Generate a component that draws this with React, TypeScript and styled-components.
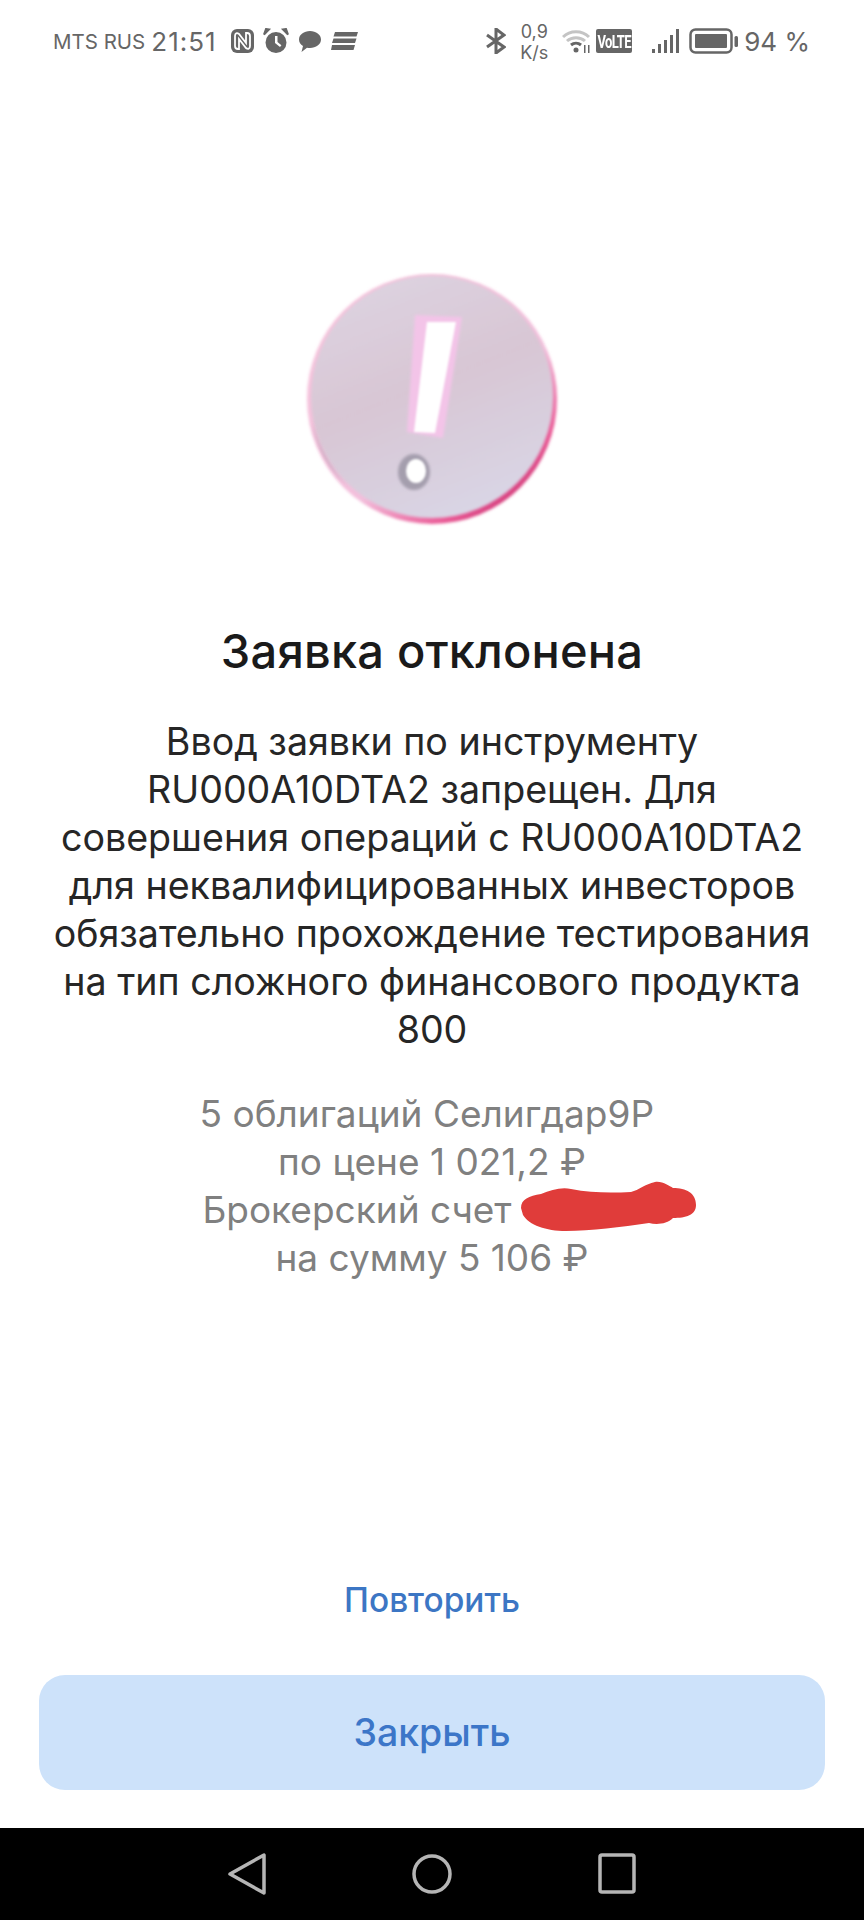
import React from "react";
import styled, { createGlobalStyle } from "styled-components";

const GlobalStyle = createGlobalStyle`
  html, body {
    margin: 0;
    padding: 0;
    background: #fff;
  }
  * {
    box-sizing: border-box;
  }
`;

const Page = styled.div`
  width: 864px;
  height: 1920px;
  display: flex;
  flex-direction: column;
  background: #fff;
  font-family: Inter, "Noto Sans", sans-serif;
  overflow: hidden;
`;

/* status bar */

const StatusBar = styled.div`
  height: 82px;
  padding: 0 54px 0 53px;
  display: flex;
  align-items: center;
  justify-content: space-between;
  color: #666;
`;

const StatusGroup = styled.div`
  display: flex;
  align-items: center;
`;

const Carrier = styled.span`
  font-size: 20.5px;
  margin-right: 6px;
`;

const Clock = styled.span`
  font-size: 26px;
  letter-spacing: 1px;
  margin-right: 14px;
`;

const StatusIcon = styled.svg<{ $gap?: number }>`
  display: block;
  margin-right: ${(p) => p.$gap ?? 0}px;
  fill: #666;
`;

const NetSpeed = styled.div`
  width: 34px;
  margin: 2px 11px 0 11px;
  display: flex;
  flex-direction: column;
  align-items: center;
  font-size: 18px;
  line-height: 21px;
`;

const Volte = styled.span`
  width: 36px;
  height: 24px;
  margin: 0 20px 0 4px;
  display: flex;
  align-items: center;
  justify-content: center;
  background: #666;
  border-radius: 2px;
  color: #fff;
  font-family: "Roboto", sans-serif;
  font-size: 13px;
  font-weight: 700;
  letter-spacing: -0.6px;
`;

const VolteLabel = styled.span`
  display: block;
  transform: scaleY(1.35);
`;

const BatteryText = styled.span`
  font-size: 26px;
  margin-left: 6px;
`;

/* message */

const Main = styled.main`
  flex: 1;
  display: flex;
  flex-direction: column;
  align-items: center;
  padding-top: 190px;
`;

const Badge = styled.svg`
  display: block;
  width: 256px;
  height: 256px;
`;

const Title = styled.h1`
  margin: 97px 0 0;
  font-size: 47px;
  line-height: 52px;
  font-weight: 500;
  letter-spacing: 0.2px;
  color: #1a1a1a;
  text-align: center;
`;

const Body = styled.p`
  margin: 41px 0 0;
  font-size: 37.6px;
  line-height: 48px;
  font-weight: 400;
  color: #262626;
  text-align: center;
`;

const Details = styled.p`
  margin: 36px 0 0;
  font-size: 37px;
  line-height: 48px;
  color: #808080;
  text-align: center;
`;

const Redacted = styled.span`
  position: relative;
  display: inline-block;
  width: 150px;
  height: 1em;
`;

const Scribble = styled.svg`
  position: absolute;
  left: 9px;
  top: -5px;
  width: 176px;
  height: 52px;
  fill: #e03c3a;
`;

const Actions = styled.div`
  margin-top: auto;
  width: 100%;
  padding: 0 39px 38px;
  display: flex;
  flex-direction: column;
  align-items: center;
`;

const RetryLink = styled.span`
  font-size: 33.4px;
  line-height: 40px;
  font-weight: 500;
  color: #3c76c4;
  margin-bottom: 55px;
`;

const CloseButton = styled.button`
  width: 100%;
  height: 115px;
  border: none;
  border-radius: 26px;
  background: #cde2fa;
  color: #3c76c8;
  font-family: inherit;
  font-size: 37.5px;
  font-weight: 500;
`;

/* android nav */

const NavBar = styled.nav`
  height: 92px;
  background: #000;
  display: flex;
  align-items: center;
  justify-content: center;
  gap: 133px;
`;

const NavIcon = styled.svg`
  display: block;
  width: 52px;
  height: 44px;
  fill: none;
  stroke: #b5b5b5;
  stroke-width: 3.5;
  stroke-linejoin: round;
`;

const App = () => (
  <>
    <GlobalStyle />
    <Page>
      <StatusBar>
        <StatusGroup>
          <Carrier>MTS RUS</Carrier>
          <Clock>21:51</Clock>
          <StatusIcon width="23" height="24" viewBox="0 0 23 24" $gap={9}>
            <rect width="23" height="24" rx="6" />
            <path d="M4 7c0-3 2-3.500 4-2l7 9V4h1c2 0 3 1 3 3v10c0 3-2 3.500-4 2l-7-9v10H7c-2 0-3-1-3-3z" fill="none" stroke="#fff" strokeWidth="1.800" />
          </StatusIcon>
          <StatusIcon width="26" height="26" viewBox="0 0 26 26" $gap={10}>
            <path fillRule="evenodd" d="M13 4a10.500 10.500 0 1 1 0 21 10.500 10.500 0 0 1 0-21zM12 8v7l5 4 1.400-1.800L14.500 14V8z" />
            <path d="M1 6.500 6 1.500 3 1zM25 6.500 20 1.500 23 1z" stroke="#666" strokeWidth="2" />
          </StatusIcon>
          <StatusIcon width="22" height="21" viewBox="0 0 22 21" $gap={10}>
            <path d="M11 0c6 0 11 3.600 11 8.500S17 17 11 17c-1 0-2-.1-3-.3L2.500 21 4 15C1.500 13.500 0 11.200 0 8.500 0 3.600 5 0 11 0z" />
          </StatusIcon>
          <StatusIcon width="27" height="18" viewBox="0 0 27 18">
            <path d="M4 0h23l-1.500 4.500H2.500zM2.500 6.500h23L24 11H1zM1 13h23l-1.500 5H0z" />
          </StatusIcon>
        </StatusGroup>
        <StatusGroup>
          <StatusIcon width="20" height="26" viewBox="0 0 20 26">
            <path d="M1 7l17 12-8 6V1l8 6L1 19" fill="none" stroke="#666" strokeWidth="3" />
          </StatusIcon>
          <NetSpeed>
            <span>0,9</span>
            <span>K/s</span>
          </NetSpeed>
          <StatusIcon width="30" height="24" viewBox="0 0 30 24">
            <path d="M1 8c7-7 19-7 26 0M5 12c5-4.500 13-4.500 18 0" fill="none" stroke="#c4c4c4" strokeWidth="3" />
            <path d="M9 16c3-2.500 7-2.500 10 0" fill="none" stroke="#666" strokeWidth="3" />
            <circle cx="14" cy="21" r="2.500" />
            <path d="M22 16h1.500v8H22zM26 16h1.500v8H26z" />
          </StatusIcon>
          <Volte>
            <VolteLabel>VoLTE</VolteLabel>
          </Volte>
          <StatusIcon width="28" height="25" viewBox="0 0 28 25" $gap={9}>
            <path d="M0 20h3v4H0zM6 15h3v9H6zM12 11h3v13h-3zM18 6h3v18h-3zM24 0h3v24h-3z" />
          </StatusIcon>
          <StatusIcon width="49" height="26" viewBox="0 0 49 26">
            <rect x="1.500" y="1.500" width="41" height="23" rx="5" fill="none" stroke="#666" strokeWidth="2.500" />
            <rect x="6" y="6" width="32" height="14" rx="1" />
            <rect x="45.500" y="8" width="3.500" height="11" rx="1.500" />
          </StatusIcon>
          <BatteryText>94 %</BatteryText>
        </StatusGroup>
      </StatusBar>

      <Main>
        <Badge viewBox="0 0 256 256">
          <defs>
            <linearGradient id="disc" x1="0.3" y1="0" x2="0.7" y2="1">
              <stop offset="0" stopColor="#dcd2e0" />
              <stop offset="0.45" stopColor="#d8c6d4" />
              <stop offset="1" stopColor="#d9d6e6" />
            </linearGradient>
            <linearGradient id="rim" x1="0.15" y1="0.1" x2="0.85" y2="0.95">
              <stop offset="0" stopColor="#f6c3dc" />
              <stop offset="0.6" stopColor="#f3bfdc" />
              <stop offset="0.85" stopColor="#ea5a96" />
              <stop offset="1" stopColor="#c9306f" />
            </linearGradient>
            <filter id="soft" x="-20%" y="-20%" width="140%" height="140%">
              <feGaussianBlur stdDeviation="1.5" />
            </filter>
            <filter id="softer" x="-20%" y="-20%" width="140%" height="140%">
              <feGaussianBlur stdDeviation="0.8" />
            </filter>
          </defs>
          <circle cx="128" cy="127" r="125" fill="url(#rim)" filter="url(#soft)" />
          <circle cx="128" cy="125" r="121" fill="url(#disc)" filter="url(#soft)" />
          <path d="M8 150a121 121 0 0 0 35 64a140 140 0 0 1-35-64z" fill="#96929f" filter="url(#soft)" />
          <polygon points="111,43 158,45 139,166 103,160" fill="#f3c4e8" filter="url(#soft)" />
          <polygon points="123,50 152,50 131,161 110,160" fill="#fff" filter="url(#softer)" />
          <ellipse cx="110" cy="200" rx="16" ry="18" fill="#a49ead" filter="url(#soft)" />
          <ellipse cx="112" cy="199" rx="10" ry="12" fill="#fff" filter="url(#softer)" />
        </Badge>
        <Title>Заявка отклонена</Title>
        <Body>
          Ввод заявки по инструменту
          <br />
          RU000A10DTA2 запрещен. Для
          <br />
          совершения операций с RU000A10DTA2
          <br />
          для неквалифицированных инвесторов
          <br />
          обязательно прохождение тестирования
          <br />
          на тип сложного финансового продукта
          <br />
          800
        </Body>
        <Details>
          5 облигаций Селигдар9Р&nbsp;
          <br />
          по цене 1 021,2 ₽
          <br />
          Брокерский счет
          <Redacted>
            <Scribble viewBox="0 0 176 52">
              <path d="M0 27C0 18 8 15 20 13C30 9 40 6 50 8C70 12 90 12 110 11C118 9 124 3 134 1C142 0 148 5 152 7C165 7 175 12 175 24C175 34 165 37 152 37C146 43 136 44 128 42C100 46 70 50 45 50C25 50 8 44 2 34z" />
            </Scribble>
          </Redacted>
          <br />
          на сумму 5 106 ₽
        </Details>
        <Actions>
          <RetryLink>Повторить</RetryLink>
          <CloseButton>Закрыть</CloseButton>
        </Actions>
      </Main>

      <NavBar>
        <NavIcon viewBox="0 0 52 44">
          <path d="M43 3v38L9 22z" />
        </NavIcon>
        <NavIcon viewBox="0 0 52 44">
          <circle cx="26" cy="22" r="18" />
        </NavIcon>
        <NavIcon viewBox="0 0 52 44">
          <rect x="9" y="3" width="34" height="37" rx="2" />
        </NavIcon>
      </NavBar>
    </Page>
  </>
);

export default App;
